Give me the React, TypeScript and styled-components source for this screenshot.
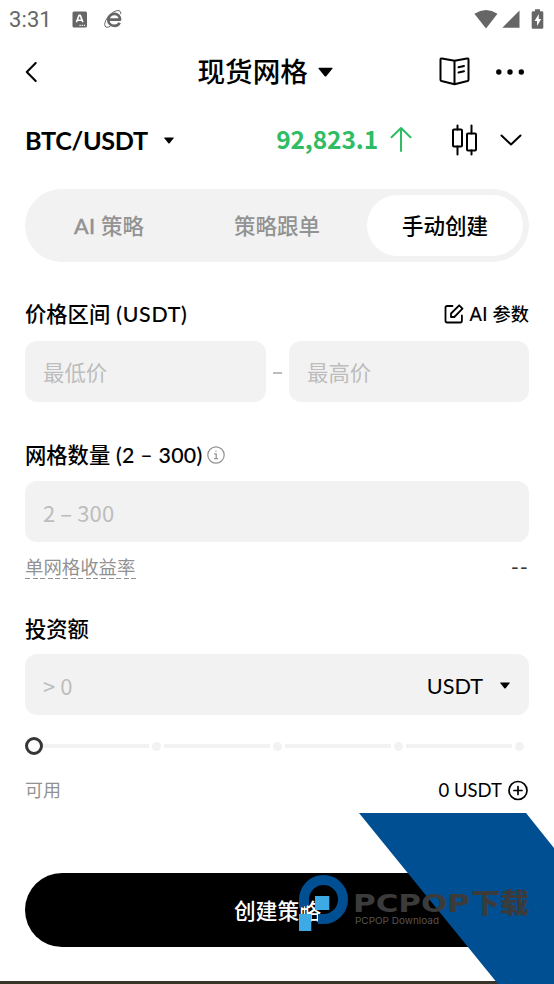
import React from "react";
import styled, { createGlobalStyle } from "styled-components";

const Global = createGlobalStyle`
  * { box-sizing: border-box; }
  body { margin: 0; background: #fff; overflow: hidden; }
  button, input { font: inherit; border: 0; padding: 0; background: none; color: inherit; }
`;

const Screen = styled.main`
  position: relative;
  width: 554px;
  height: 984px;
  overflow: hidden;
  display: flex;
  flex-direction: column;
  background: #fff;
  color: #000;
  font-family: Lato, "Noto Sans CJK SC", sans-serif;
`;

const Row = styled.div<{ $h: number; $mt?: number }>`
  display: flex;
  align-items: center;
  flex: none;
  height: ${(p) => p.$h}px;
  margin-top: ${(p) => p.$mt ?? 0}px;
  padding: 0 25px;
`;

const StatusBar = styled(Row)`
  padding: 0 10px 0 9px;
  color: #666;
`;

const HeaderRow = styled(Row)`
  padding-right: 30px;
`;

const PairRow = styled(Row)`
  padding-right: 32px;
`;

const Clock = styled.span`
  font: 400 22px/26px Roboto, sans-serif;
  letter-spacing: 0.1px;
  width: 63px;
  padding-top: 2px;
`;

const Push = styled.span`
  flex: 1;
`;

const Text = styled.span<{ $size: number; $weight?: number; $color?: string; $track?: number; $gap?: number }>`
  font-size: ${(p) => p.$size}px;
  line-height: 30px;
  font-weight: ${(p) => p.$weight ?? 400};
  color: ${(p) => p.$color ?? "#000"};
  letter-spacing: ${(p) => p.$track ?? 0}px;
  margin-left: ${(p) => p.$gap ?? 0}px;
  white-space: pre;
`;

const Latin = styled(Text)`
  font-family: Lato, sans-serif;
`;

const Numeric = styled(Text)`
  font-family: "Noto Sans CJK SC", sans-serif;
  padding-bottom: 2px;
`;

const Medium = styled.span<{ $track?: number; $heft?: number }>`
  -webkit-text-stroke: ${(p) => p.$heft ?? 0.1}px currentColor;
  letter-spacing: ${(p) => p.$track ?? 0}px;
`;

const Icon = styled.svg<{ $gap?: number }>`
  display: block;
  flex: none;
  margin-left: ${(p) => p.$gap ?? 0}px;
  fill: none;
  stroke: currentColor;
  stroke-linecap: round;
  stroke-linejoin: round;
`;

const Tabs = styled.nav`
  display: flex;
  flex: none;
  height: 73px;
  margin: 15px 25px 0;
  padding: 6px;
  border-radius: 37px;
  background: #f2f2f2;
`;

const Tab = styled.button<{ $active?: boolean; $width: number }>`
  width: ${(p) => p.$width}px;
  height: 61px;
  padding-bottom: 2px;
  border-radius: 31px;
  background: ${(p) => (p.$active ? "#fff" : "transparent")};
  color: ${(p) => (p.$active ? "#000" : "#929292")};
  font-size: 21.5px;
  font-weight: 500;
  white-space: nowrap;
`;

const Field = styled.div<{ $width: number }>`
  display: flex;
  align-items: center;
  width: ${(p) => p.$width}px;
  height: 61px;
  padding: 2px 19px 0 18px;
  border-radius: 12px;
  background: #f2f2f2;
`;

const Dash = styled.span`
  width: 9px;
  height: 2px;
  margin: 3px 7px 0;
  background: #bdbdbd;
`;

const Underlined = styled.div`
  width: 111px;
  height: 24px;
  display: flex;
  align-items: center;
  background: repeating-linear-gradient(90deg, #929292 0 5px, transparent 5px 7.6px) 0 100% / 100% 1px no-repeat;
`;

const Slider = styled.div`
  display: flex;
  align-items: center;
  flex: none;
  height: 20px;
  margin: 21px 30px 0 24.5px;
`;

const Knob = styled.span`
  width: 18.5px;
  height: 18.5px;
  border: 3px solid #363636;
  border-radius: 50%;
`;

const Track = styled.span`
  flex: 1;
  height: 4px;
  margin-right: 3px;
  background: #f2f2f2;
`;

const Stop = styled.span`
  width: 9px;
  height: 9px;
  margin-right: 3px;
  border-radius: 50%;
  background: #f2f2f2;
  &:last-child { margin-right: 0; }
`;

const Submit = styled.button`
  flex: none;
  width: 504px;
  height: 74px;
  margin: 68px 25px 0;
  padding: 0 0 2px 1px;
  border-radius: 37px;
  background: #000;
  color: #fff;
  font-size: 21.7px;
  font-weight: 500;
`;

const BottomEdge = styled.div`
  flex: none;
  height: 3px;
  margin-top: auto;
  background: #38342a;
`;

const Overlay = styled.svg`
  position: absolute;
  left: 290px;
  top: 813px;
  pointer-events: none;
`;

const Caret = ({ w, h, gap }: { w: number; h: number; gap: number }) => (
  <Icon $gap={gap} width={w} height={h} viewBox="0 0 14 9" preserveAspectRatio="none">
    <path d="M.8 .6H13.2Q14 .8 13.4 1.6L7.9 8Q7 9 6.1 8L.6 1.6Q0 .8 .8 .6Z" fill="currentColor" stroke="none" />
  </Icon>
);

export default function App() {
  return (
    <>
      <Global />
      <Screen>
        <StatusBar $h={38}>
          <Clock>3:31</Clock>
          <Icon width="16" height="17" viewBox="0 0 16 17">
            <rect x=".5" y=".5" width="14.5" height="16" rx="1.5" fill="#666" stroke="none" />
            <path d="M4.4 11.3 7 4.4h1.3L10.9 11.3M5.4 9.2h4.5" stroke="#fff" strokeWidth="1.6" strokeLinecap="butt" />
            <path d="M7.5 14.3h6" stroke="#fff" strokeWidth="1.2" strokeDasharray="1.2 1" strokeLinecap="butt" />
          </Icon>
          <Icon $gap={16} width="20" height="20" viewBox="0 0 20 20">
            <path d="M4.3 10.7H16C16 6.9 13.7 4.8 10.5 4.8S4.3 7.2 4.3 10.7s2.7 6.1 6.1 6.1c2.5 0 4.3-1.1 5.2-3.1" strokeWidth="2.7" strokeLinecap="butt" />
            <path d="M16.8 4.8C17.4 1.5 14 .3 9.3 3.2 3.7 6.5-.3 13.4 1 17c.7 1.8 2.7 1.5 5 .5" strokeWidth="1" />
          </Icon>
          <Push />
          <Icon width="24" height="19" viewBox="0 0 24 19">
            <path d="M.4 3.7Q12-3.5 23.5 3.7L12 18.5Z" fill="#666" stroke="none" />
          </Icon>
          <Icon $gap={4} width="18" height="18" viewBox="0 0 18 18">
            <path d="M17.5.5V17.8H.3Z" fill="#666" stroke="none" />
          </Icon>
          <Icon $gap={11} width="13" height="20" viewBox="0 0 13 20">
            <path d="M4 .2h5v2h2q1.3 0 1.3 1.3v15q0 1.3-1.3 1.3H2Q.7 19.8.7 18.5v-15Q.7 2.2 2 2.2h2Z" fill="#666" stroke="none" />
            <path d="M7.8 5 3.5 12H6v5l4.2-7H7.8Z" fill="#fff" stroke="none" />
          </Icon>
        </StatusBar>

        <HeaderRow $h={68}>
          <Icon width="12" height="20" viewBox="0 0 12 20" strokeWidth="2">
            <path d="M10.7 1 1.8 10l8.9 9" />
          </Icon>
          <Text $size={27.6} $weight={500} $gap={160.5}>现货网格</Text>
          <Caret w={15} h={10} gap={10.5} />
          <Push />
          <Icon width="31" height="30" viewBox="0 0 31 30" strokeWidth="2">
            <path d="M15.5 3.8 28 1.4Q29.5 1.2 29.5 2.7v20q0 1-1 1.3L15.5 27.3 2.5 24q-1-.3-1-1.3v-20Q1.5 1.2 3 1.4ZM15.5 3.8V27M19.5 10.2l5.5-1.2M19.5 15.5l5.5-1.2" />
          </Icon>
          <Icon $gap={26} width="28" height="6" viewBox="0 0 28 6">
            <g fill="#000" stroke="none"><circle cx="2.8" cy="3" r="2.7" /><circle cx="14" cy="3" r="2.7" /><circle cx="25.3" cy="3" r="2.7" /></g>
          </Icon>
        </HeaderRow>

        <PairRow $h={68}>
          <Latin $size={25.2} $weight={700} $track={-0.35}>BTC/USDT</Latin>
          <Caret w={10} h={7} gap={16.5} />
          <Push />
          <Numeric $size={24.5} $weight={700} $color="#2ebd63" $track={-0.1}>92,823.1</Numeric>
          <Icon $gap={12} width="22" height="28" viewBox="0 0 22 28" strokeWidth="2" color="#2ebd63">
            <path d="M11 25V2M1.5 11.3 11 2l9.5 9.3" />
          </Icon>
          <Icon $gap={39} width="27" height="32" viewBox="0 0 27 32" strokeWidth="2">
            <path d="M6.5 1.5v4m0 17v8M20.5 1.5v8m0 17v4" />
            <rect x="2" y="5.5" width="9" height="17" rx="1" /><rect x="16" y="9.5" width="9" height="17" rx="1" />
          </Icon>
          <Icon $gap={22} width="22" height="14" viewBox="0 0 22 14" strokeWidth="2">
            <path d="m1.5 2.5 9.5 9 9.5-9" />
          </Icon>
        </PairRow>

        <Tabs>
          <Tab $width={156}><Medium $track={0.3} $heft={0.4}>AI </Medium>策略</Tab>
          <Tab $width={180}>策略跟单</Tab>
          <Tab $width={156} $active>手动创建</Tab>
        </Tabs>

        <Row $h={30} $mt={37}>
          <Text $size={21.3} $weight={500}>价格区间<Medium $track={0.7}> (USDT)</Medium></Text>
          <Push />
          <Icon width="20" height="20" viewBox="0 0 20 20" strokeWidth="1.8">
            <path d="M8.5 2H3.2Q1.5 2 1.5 3.7v13.1q0 1.7 1.7 1.7h13q1.7 0 1.7-1.7V11.5M7 13V9.5l8.2-8.2 3.3 3.3L10.3 13Z" />
          </Icon>
          <Text $size={18.2} $weight={500} $gap={6}><Medium $track={0.3}>AI </Medium>参数</Text>
        </Row>
        <Row $h={61} $mt={12}>
          <Field $width={241}><Text $size={21.4} $color="#bdbdbd">最低价</Text></Field>
          <Dash />
          <Field $width={240}><Text $size={21.4} $color="#bdbdbd">最高价</Text></Field>
        </Row>

        <Row $h={30} $mt={38}>
          <Text $size={21.3} $weight={500}>网格数量<Medium $track={0.3}> (2 – 300)</Medium></Text>
          <Icon $gap={4.5} width="18" height="18" viewBox="0 0 18 18" color="#929292" strokeWidth="1.2">
            <circle cx="9" cy="9" r="8.2" /><path d="M7.6 7.8h1.6v4.6M7.6 12.7h3M9 5v.3" />
          </Icon>
        </Row>
        <Row $h={61} $mt={11}>
          <Field $width={504}><Numeric $size={22} $color="#bdbdbd" $track={0.1}>2 – 300</Numeric></Field>
        </Row>
        <Row $h={24} $mt={13}>
          <Underlined><Text $size={18.4} $color="#929292">单网格收益率</Text></Underlined>
          <Push />
          <Latin $size={22} $color="#363636" $track={1}>--</Latin>
        </Row>

        <Row $h={30} $mt={35}>
          <Text $size={21.3} $weight={500}>投资额</Text>
        </Row>
        <Row $h={61} $mt={10}>
          <Field $width={504}>
            <Numeric $size={22} $color="#bdbdbd">{"> 0"}</Numeric>
            <Push />
            <Latin $size={21.7}>USDT</Latin>
            <Caret w={10} h={7} gap={17} />
          </Field>
        </Row>

        <Slider>
          <Knob />
          {[1, 2, 3, 4].map((n) => (
            <React.Fragment key={n}><Track /><Stop /></React.Fragment>
          ))}
        </Slider>

        <Row $h={30} $mt={19}>
          <Text $size={18} $color="#929292">可用</Text>
          <Push />
          <Latin $size={18.5}>0 USDT</Latin>
          <Icon $gap={6} width="21" height="21" viewBox="0 0 21 21" strokeWidth="1.7">
            <circle cx="10" cy="10.5" r="9" /><path d="M6 10.5h8M10 6.5v8" />
          </Icon>
        </Row>

        <Submit>创建策略</Submit>
        <BottomEdge />

        <Overlay width="264" height="171" viewBox="290 813 264 171" aria-label="PCPOP下载">
          <path d="M359 813H526L554 848V984H498Z" fill="#004f92" />
          <path d="M299 908V899.5A24.5 24.5 0 1 1 323.5 924H318V914H323.5A14.5 14.5 0 1 0 309 899.5V905Z" fill="#004f92" />
          <path d="M315 896h14.3v14H315ZM299 914h12.3v17H299Z" fill="#3da9e5" />
          <g fill="#3b3b3b">
            <text x="353" y="912" fontFamily="'DejaVu Sans', sans-serif" fontSize="24.5" fontWeight="700" textLength="117" lengthAdjust="spacingAndGlyphs">PCPOP</text>
            <text x="471" y="913" fontFamily="'Noto Sans CJK SC', sans-serif" fontSize="27" fontWeight="900" textLength="58" lengthAdjust="spacingAndGlyphs">下载</text>
          </g>
          <text x="355" y="924" fill="#555" fontFamily="Inter, sans-serif" fontSize="9.5" textLength="84" lengthAdjust="spacingAndGlyphs">PCPOP Download</text>
        </Overlay>
      </Screen>
    </>
  );
}
